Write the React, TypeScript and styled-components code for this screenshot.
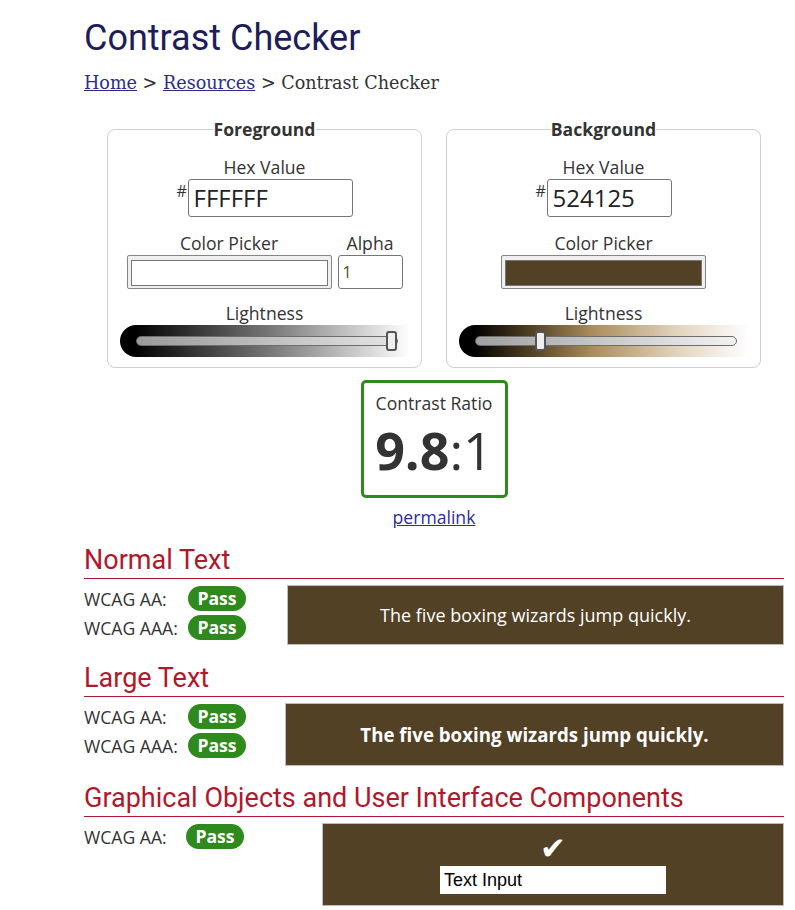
import React from "react";
import styled, { createGlobalStyle } from "styled-components";

const Global = createGlobalStyle`
  html, body { margin: 0; padding: 0; background: #fff; }
  body { font-family: "Open Sans", "Liberation Sans", sans-serif; color: #333; font-size: 17.6px; }
  * { box-sizing: border-box; }
`;

const Page = styled.main`
  width: 700px;
  margin-left: 84px;
  padding-top: 16px;
`;

const Title = styled.h1`
  font-family: Roboto, "Liberation Sans", sans-serif;
  font-weight: 400;
  font-size: 36px;
  line-height: 44px;
  color: #1d1d5c;
  margin: 0;
`;

const Crumbs = styled.nav`
  font-family: "DejaVu Serif", "Liberation Serif", serif;
  font-size: 17.6px;
  line-height: 24px;
  margin-top: 11px;
  color: #333;
  a { color: #2c2c8c; text-decoration: underline; }
`;

const Pickers = styled.div`
  display: flex;
  justify-content: center;
  gap: 24px;
  margin-top: 22px;
`;

const Fieldset = styled.fieldset`
  width: 315px;
  margin: 0;
  padding: 14px 10px 10px 10px;
  border: 1px solid #cfcfcf;
  border-radius: 8px;
  display: flex;
  flex-direction: column;
  align-items: center;
`;

const Legend = styled.legend`
  margin: 0 auto;
  padding: 0;
  font-weight: 700;
  font-size: 17.6px;
  line-height: 24px;
  color: #333;
`;

const Label = styled.div`
  font-size: 17.6px;
  line-height: 24px;
  text-align: center;
  color: #333;
`;

const HexRow = styled.div`
  display: flex;
  align-items: flex-start;
`;

const Hash = styled.span`
  font-size: 16px;
  line-height: 16px;
  margin-top: 4px;
  width: 11px;
`;

const HexInput = styled.div<{ $w: number }>`
  width: ${(p) => p.$w}px;
  height: 38px;
  border: 1px solid #767676;
  border-radius: 3px;
  font-size: 24px;
  line-height: 36px;
  padding-left: 5px;
  color: #222;
`;

const PickRow = styled.div`
  display: flex;
  gap: 6px;
  margin-top: 14px;
`;

const PickCol = styled.div`
  display: flex;
  flex-direction: column;
  align-items: center;
`;

const Swatch = styled.div<{ $c: string }>`
  width: 205px;
  height: 34px;
  border: 1px solid #858585;
  border-radius: 2px;
  background: #efefef;
  padding: 4px 3px;
  &::after {
    content: "";
    display: block;
    height: 100%;
    border: 1px solid #777;
    background: ${(p) => p.$c};
  }
`;

const AlphaInput = styled.div`
  width: 65px;
  height: 34px;
  border: 1px solid #767676;
  border-radius: 3px;
  font-size: 16px;
  line-height: 32px;
  padding-left: 4px;
  color: #5a4a10;
`;

const LightBlock = styled.div`
  margin-top: 12px;
  display: flex;
  flex-direction: column;
  align-items: center;
`;

const Band = styled.div<{ $bg: string }>`
  width: 290px;
  height: 32px;
  border-radius: 16px 0 0 16px;
  background: ${(p) => p.$bg};
  padding: 0 12px 0 16px;
  display: flex;
  align-items: center;
`;

const Track = styled.div<{ $bg: string }>`
  position: relative;
  flex: 1;
  height: 10px;
  border: 1px solid #6d6d6d;
  border-radius: 5px;
  background: ${(p) => p.$bg};
`;

const Thumb = styled.div`
  position: absolute;
  top: -6px;
  width: 11px;
  height: 20px;
  border: 2px solid #555;
  border-radius: 3px;
  background: #efefef;
`;

const RatioWrap = styled.div`
  display: flex;
  flex-direction: column;
  align-items: center;
  margin-top: 12px;
`;

const RatioBox = styled.div`
  width: 147px;
  height: 118px;
  border: 3px solid #2e8a1c;
  border-radius: 5px;
  display: flex;
  flex-direction: column;
  align-items: center;
  padding-top: 8px;
`;

const RatioValue = styled.div`
  font-size: 52px;
  line-height: 60px;
  margin-top: 5px;
  color: #333;
  b { font-weight: 700; }
`;

const Permalink = styled.a`
  margin-top: 7px;
  font-size: 17.6px;
  line-height: 24px;
  color: #2c2ca0;
  text-decoration: underline;
`;

const Section = styled.section<{ $mt: number }>`
  margin-top: ${(p) => p.$mt}px;
`;

const Heading = styled.h2`
  font-family: Roboto, "Liberation Sans", sans-serif;
  font-weight: 400;
  font-size: 27px;
  line-height: 30px;
  color: #b0182b;
  margin: 0;
  padding-bottom: 3px;
  border-bottom: 1px solid #b0182b;
`;

const Body = styled.div`
  display: flex;
  align-items: flex-start;
  margin-top: 5px;
`;

const Results = styled.div<{ $w: number }>`
  width: ${(p) => p.$w}px;
  flex: none;
`;

const ResultRow = styled.div<{ $lw: number }>`
  display: grid;
  grid-template-columns: ${(p) => p.$lw}px auto;
  align-items: center;
  height: 29px;
`;

const Badge = styled.span`
  display: inline-block;
  width: 58px;
  height: 25px;
  border-radius: 13px;
  background: #2e8a1c;
  color: #fff;
  font-weight: 700;
  font-size: 17.6px;
  line-height: 25px;
  text-align: center;
`;

const Sample = styled.div<{ $h: number; $bold?: boolean; $mt: number }>`
  flex: 1;
  height: ${(p) => p.$h}px;
  margin-top: ${(p) => p.$mt}px;
  background: #524125;
  border: 1px solid #bdbdbd;
  color: #fff;
  font-size: ${(p) => (p.$bold ? "18.7px" : "18px")};
  font-weight: ${(p) => (p.$bold ? 700 : 400)};
  display: flex;
  align-items: center;
  justify-content: center;
`;

const UiSample = styled.div`
  flex: 1;
  height: 83px;
  margin-top: 1px;
  background: #524125;
  border: 1px solid #bdbdbd;
  display: flex;
  flex-direction: column;
  align-items: center;
  padding-top: 8px;
`;

const Check = styled.div`
  color: #fff;
  font-size: 31px;
  line-height: 32px;
  font-family: "DejaVu Sans", sans-serif;
`;

const TextInput = styled.div`
  margin-top: 2px;
  width: 226px;
  height: 28px;
  background: #fff;
  color: #000;
  font-family: "Liberation Sans", Arial, sans-serif;
  font-size: 18px;
  line-height: 28px;
  padding-left: 4px;
`;

type PickerProps = {
  title: string;
  hex: string;
  hexW: number;
  color: string;
  alpha: boolean;
  band: string;
  track: string;
  value: number;
};

function ColorPanel({ title, hex, hexW, color, alpha, band, track, value }: PickerProps) {
  return (
    <Fieldset>
      <Legend>{title}</Legend>
      <Label>Hex Value</Label>
      <HexRow>
        <Hash>#</Hash>
        <HexInput $w={hexW}>{hex}</HexInput>
      </HexRow>
      <PickRow>
        <PickCol>
          <Label>Color Picker</Label>
          <Swatch $c={color} />
        </PickCol>
        {alpha && (
          <PickCol>
            <Label>Alpha</Label>
            <AlphaInput>1</AlphaInput>
          </PickCol>
        )}
      </PickRow>
      <LightBlock>
        <Label>Lightness</Label>
        <Band $bg={band}>
          <Track $bg={track}>
            <Thumb style={{ left: `calc(${value}% - ${value * 0.11}px)` }} />
          </Track>
        </Band>
      </LightBlock>
    </Fieldset>
  );
}

function Result({ label, lw }: { label: string; lw: number }) {
  return (
    <ResultRow $lw={lw}>
      <span>{label}</span>
      <Badge>Pass</Badge>
    </ResultRow>
  );
}

const sentence = "The five boxing wizards jump quickly.";

export default function App() {
  return (
    <>
      <Global />
      <Page>
        <Title>Contrast Checker</Title>
        <Crumbs>
          <a href="#">Home</a> &gt; <a href="#">Resources</a> &gt; Contrast Checker
        </Crumbs>
        <Pickers>
          <ColorPanel
            title="Foreground"
            hex="FFFFFF"
            hexW={165}
            color="#ffffff"
            alpha
            band="linear-gradient(to right, #000 0%, #000 5%, #808080 55%, #fff 100%)"
            track="linear-gradient(to right, #9a9a9a, #e4e4e4)"
            value={100}
          />
          <ColorPanel
            title="Background"
            hex="524125"
            hexW={125}
            color="#524125"
            alpha={false}
            band="linear-gradient(to right, #000 0%, #000 5%, #524125 25%, #ab8c5c 46%, #e2d3bd 75%, #fff 100%)"
            track="linear-gradient(to right, #a0a0a0, #f2f2f2)"
            value={24}
          />
        </Pickers>
        <RatioWrap>
          <RatioBox>
            <Label>Contrast Ratio</Label>
            <RatioValue>
              <b>9.8</b>:1
            </RatioValue>
          </RatioBox>
          <Permalink href="#">permalink</Permalink>
        </RatioWrap>

        <Section $mt={16}>
          <Heading>Normal Text</Heading>
          <Body>
            <Results $w={203}>
              <Result label="WCAG AA:" lw={104} />
              <Result label="WCAG AAA:" lw={104} />
            </Results>
            <Sample $h={60} $mt={1}>{sentence}</Sample>
          </Body>
        </Section>

        <Section $mt={18}>
          <Heading>Large Text</Heading>
          <Body>
            <Results $w={201}>
              <Result label="WCAG AA:" lw={104} />
              <Result label="WCAG AAA:" lw={104} />
            </Results>
            <Sample $h={63} $mt={1} $bold>{sentence}</Sample>
          </Body>
        </Section>

        <Section $mt={17}>
          <Heading>Graphical Objects and User Interface Components</Heading>
          <Body>
            <Results $w={238}>
              <Result label="WCAG AA:" lw={102} />
            </Results>
            <UiSample>
              <Check>✔</Check>
              <TextInput>Text Input</TextInput>
            </UiSample>
          </Body>
        </Section>
      </Page>
    </>
  );
}
